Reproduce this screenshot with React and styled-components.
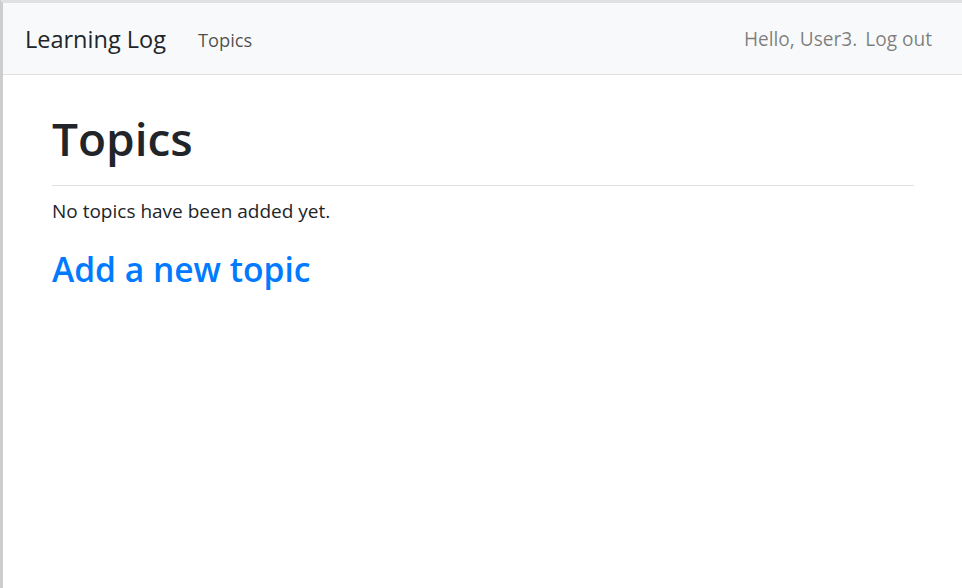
import styled, { createGlobalStyle } from "styled-components";

const GlobalStyle = createGlobalStyle`
    html, body {
        margin: 0;
        padding: 0;
        background: #ffffff;
    }
    body {
        font-family: "Open Sans", "Noto Sans", sans-serif;
        color: #212529;
    }
    * {
        box-sizing: border-box;
    }
`

const Frame = styled.div`
    min-height: 588px;
    border-top: 3px solid #e1e1e1;
    border-left: 3px solid #cdcdcd;
    background: #ffffff;
`

const NavBar = styled.nav`
    display: flex;
    align-items: center;
    justify-content: space-between;
    height: 72px;
    padding: 3px 30px 0 22px;
    background-color: #f8f9fa;
    border-bottom: 1px solid #dfe1e3;
`

const NavGroup = styled.div`
    display: flex;
    align-items: center;
    gap: ${props => props.gap || 0}px;
`

const Brand = styled.a`
    font-size: 23.5px;
    color: #212529;
    text-decoration: none;
    line-height: 1;
`

const NavLink = styled.a`
    font-size: ${props => props.muted ? 19.1 : 18.3}px;
    color: ${props => props.muted ? 'rgba(0, 0, 0, 0.5)' : 'rgba(0, 0, 0, 0.7)'};
    text-decoration: none;
    line-height: 1;
`

const Main = styled.main`
    padding: 35px 48px 0 49px;
`

const PageHeader = styled.div`
    padding-bottom: 19px;
    margin-bottom: 11px;
    border-bottom: 1px solid #dee2e6;
`

const Title = styled.h1`
    margin: 0;
    font-size: 46px;
    font-weight: 600;
    line-height: 56px;
    color: #212529;
`

const Message = styled.p`
    margin: 0;
    font-size: 19px;
    line-height: 28.5px;
`

const AddLink = styled.a`
    display: inline-block;
    margin-top: 23px;
    font-size: 33.6px;
    font-weight: 600;
    line-height: 40px;
    color: #007bff;
    text-decoration: none;
`

export default function App() {
    return (
        <>
            <GlobalStyle />
            <Frame>
                <NavBar>
                    <NavGroup gap={32}>
                        <Brand href="#">Learning Log</Brand>
                        <NavLink href="#">Topics</NavLink>
                    </NavGroup>
                    <NavGroup gap={8}>
                        <NavLink muted>Hello, User3.</NavLink>
                        <NavLink muted href="#">Log out</NavLink>
                    </NavGroup>
                </NavBar>
                <Main>
                    <PageHeader>
                        <Title>Topics</Title>
                    </PageHeader>
                    <Message>No topics have been added yet.</Message>
                    <AddLink href="#">Add a new topic</AddLink>
                </Main>
            </Frame>
        </>
    )
}
